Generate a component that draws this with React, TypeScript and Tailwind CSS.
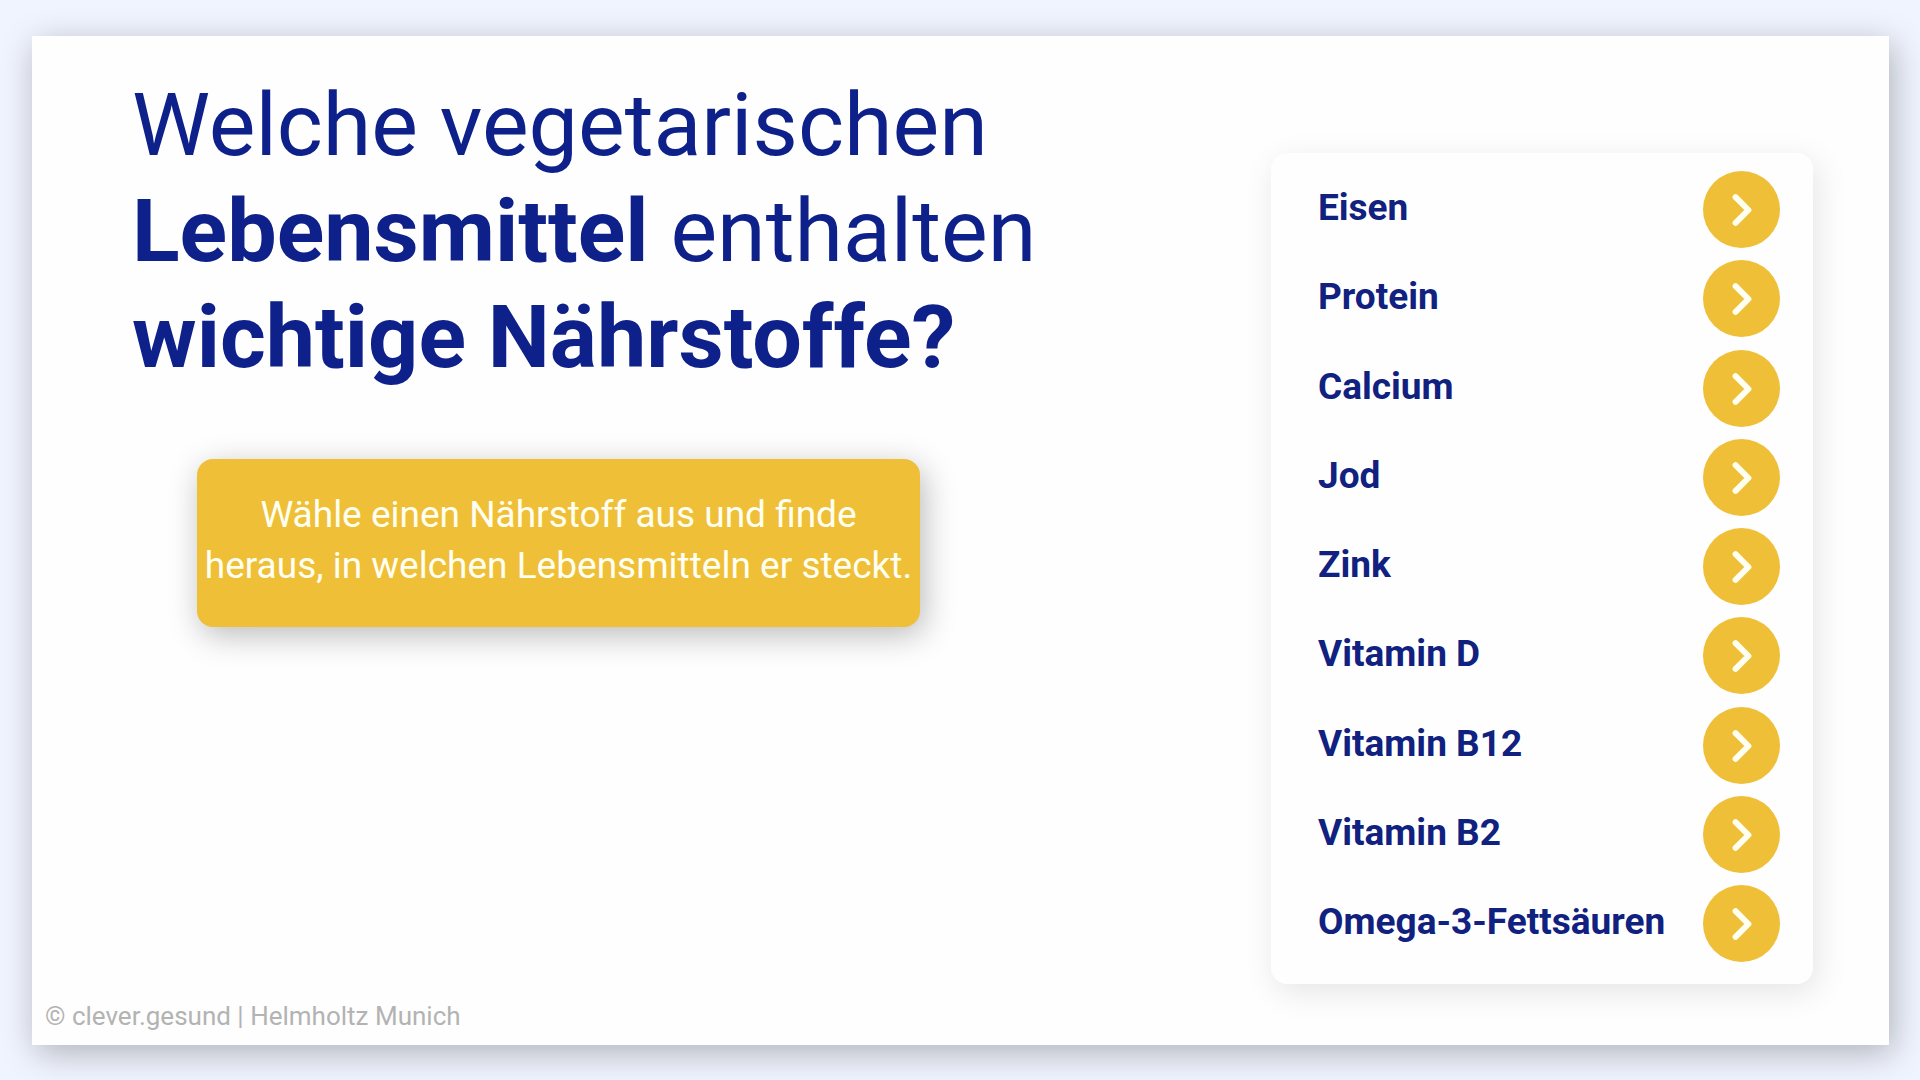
const nutrients = [
  "Eisen",
  "Protein",
  "Calcium",
  "Jod",
  "Zink",
  "Vitamin D",
  "Vitamin B12",
  "Vitamin B2",
  "Omega-3-Fettsäuren",
];

function Chevron() {
  return (
    <svg
      viewBox="0 0 78 78"
      className="size-full fill-none stroke-[#fffff2] stroke-[6]"
      strokeLinecap="round"
      strokeLinejoin="round"
      aria-hidden="true"
    >
      <path d="M33 26.5 46 39.5 33 52.5" />
    </svg>
  );
}

function NutrientList() {
  return (
    <ul className="flex min-h-[831px] w-[542px] shrink-0 flex-col justify-between rounded-2xl bg-[#fefefe] pt-[18px] pr-[33px] pb-[22px] pl-[47px] shadow-[4px_8px_32px_rgba(0,0,0,0.1)]">
      {nutrients.map((name, index) => (
        <li key={name} className="flex items-center justify-between">
          <span
            id={`nutrient-${index}`}
            className="pb-[3px] text-[37px] leading-10 font-bold whitespace-nowrap text-[#10217f]"
          >
            {name}
          </span>
          <button
            type="button"
            aria-labelledby={`nutrient-${index}`}
            className="size-[77px] shrink-0 cursor-pointer rounded-full bg-[#efbf38]"
          >
            <Chevron />
          </button>
        </li>
      ))}
    </ul>
  );
}

function App() {
  return (
    <div className="flex min-h-screen bg-[#f0f4fe] pt-9 pr-[31px] pb-[35px] pl-8 font-[Roboto,sans-serif]">
      <main className="flex flex-1 flex-col bg-[#fefefe] shadow-[4px_8px_32px_rgba(0,0,0,0.27)]">
        <div className="flex flex-1 items-start justify-between pr-[76px] pl-[100px]">
          <section className="pt-9">
            <h1 className="text-[88px] leading-[106px] font-normal text-[#0e2089]">
              Welche vegetarischen
              <br />
              <strong className="font-bold">Lebensmittel</strong> enthalten
              <br />
              <strong className="font-bold">wichtige Nährstoffe?</strong>
            </h1>

            <p className="mt-[69px] ml-[65px] h-[168px] w-[723px] rounded-2xl bg-[#efbf38] pt-[30px] text-center text-[37px] leading-[51px] text-[#fffff2] shadow-[4px_8px_32px_rgba(0,0,0,0.27)]">
              Wähle einen Nährstoff aus und finde
              <br />
              heraus, in welchen Lebensmitteln er steckt.
            </p>
          </section>

          <div className="pt-[117px]">
            <NutrientList />
          </div>
        </div>

        <footer className="px-[13px] pb-[13px] text-[26px] leading-8 text-[#b3b3b3]">
          © clever.gesund | Helmholtz Munich
        </footer>
      </main>
    </div>
  );
}

export default App;
